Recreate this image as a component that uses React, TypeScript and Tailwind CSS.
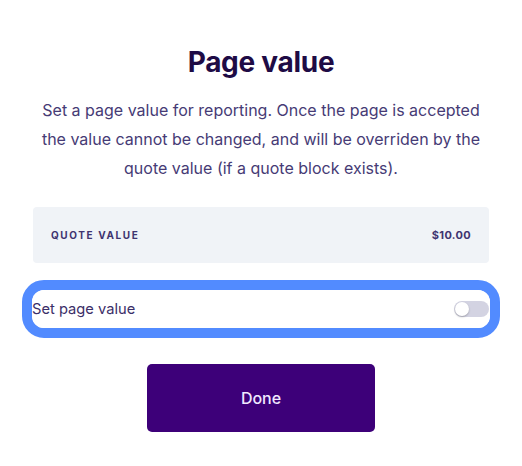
export default function App() {
  return (
    <main
      className="flex min-h-[466px] w-full flex-col items-center bg-white px-[33px] pt-[42px] text-[#463b75]"
      style={{ fontFamily: "Inter, 'Noto Sans', sans-serif" }}
    >
      <h1 className="text-[28px] font-bold leading-[40px] tracking-[-0.01em] text-[#1e0b45]">Page value</h1>
      <p className="mt-[14px] px-[4px] text-center text-[16px] leading-[29px]">
        Set a page value for reporting. Once the page is accepted the value cannot be changed, and will be
        overriden by the quote value (if a quote block exists).
      </p>

      <div className="mt-[24px] flex h-[56px] w-full items-center justify-between rounded-[4px] bg-[#f0f3f7] px-[18px]">
        <span className="text-[10px] font-bold tracking-[0.16em] text-[#3f3470]">QUOTE VALUE</span>
        <span className="text-[11px] font-bold tracking-[0.03em] text-[#3f3470]">$10.00</span>
      </div>

      <div className="mt-[17px] w-[calc(100%+22px)] rounded-[22px] border-[10px] border-[#528bff]">
        <label className="flex h-[38px] items-center justify-between rounded-[12px] bg-white pr-[1px]">
          <span className="text-[14.7px] text-[#3b2e68]">Set page value</span>
          <span className="relative h-[16px] w-[35px] rounded-full bg-[#d3d3e2]">
            <span className="absolute left-[1px] top-[1px] h-[14px] w-[14px] rounded-full bg-white shadow-[0_1px_2px_rgba(0,0,0,0.25)]" />
          </span>
        </label>
      </div>

      <button className="mt-[26px] h-[68px] w-[228px] rounded-[5px] bg-[#3d0079] text-[16px] font-medium text-[#f1e9ff]">
        Done
      </button>
    </main>
  );
}
